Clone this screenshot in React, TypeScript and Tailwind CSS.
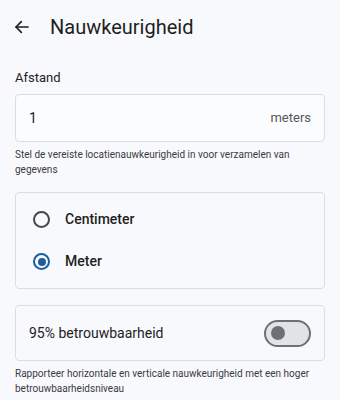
import React, { useState } from "react";

const font = { fontFamily: "Roboto, 'Noto Sans', sans-serif" };

const Radio = ({ checked }: { checked: boolean }) => (
  <span
    className={`flex h-[17px] w-[17px] items-center justify-center rounded-full border-2 ${
      checked ? "border-[#1b5e9b]" : "border-[#45474b]"
    }`}
  >
    {checked && <span className="h-[8px] w-[8px] rounded-full bg-[#1b5e9b]" />}
  </span>
);

export default function App() {
  const [unit, setUnit] = useState("meter");
  const [confident, setConfident] = useState(false);

  return (
    <div className="h-[400px] w-[340px] overflow-hidden bg-[#f8f9fd] text-[#1c1c1f]" style={font}>
      <div className="flex h-[54px] items-center px-[14px]">
        <svg width="16" height="16" viewBox="0 0 24 24" fill="none" stroke="#1c1c1f" strokeWidth="2.4" strokeLinecap="round" strokeLinejoin="round">
          <path d="M21 12H3" />
          <path d="M11 4l-8 8 8 8" />
        </svg>
        <h1 className="ml-[20px] text-[20px] leading-none text-[#1f1f22]">Nauwkeurigheid</h1>
      </div>

      <div className="px-[15px]">
        <div className="mt-[17px] text-[13px] leading-none text-[#222]">Afstand</div>
        <div className="mt-[10px] flex h-[48px] items-center justify-between rounded-[4px] border border-[#dcdde1] bg-[#fbfcfe] pl-[13px] pr-[13px]">
          <span className="text-[14px] text-[#222]">1</span>
          <span className="text-[13px] text-[#55575c]">meters</span>
        </div>
        <p className="mt-[5px] text-[10px] leading-[15px] text-[#3a3b3f]">
          Stel de vereiste locatienauwkeurigheid in voor verzamelen van gegevens
        </p>

        <div className="mt-[15px] flex h-[97px] flex-col justify-center gap-[24px] rounded-[4px] border border-[#dcdde1] bg-[#f8f9fd] px-[17px]">
          {[
            { id: "centimeter", label: "Centimeter" },
            { id: "meter", label: "Meter" },
          ].map((o) => (
            <button key={o.id} onClick={() => setUnit(o.id)} className="flex h-[18px] items-center gap-[15px] text-left">
              <Radio checked={unit === o.id} />
              <span className="text-[14px] font-medium text-[#1f1f22]">{o.label}</span>
            </button>
          ))}
        </div>

        <div className="mt-[16px] flex h-[56px] items-center justify-between rounded-[4px] border border-[#dcdde1] bg-[#f8f9fd] pl-[13px] pr-[13px]">
          <span className="text-[14px] text-[#222]">95% betrouwbaarheid</span>
          <button
            onClick={() => setConfident(!confident)}
            className={`flex h-[27px] w-[47px] items-center rounded-full border-2 px-[5px] ${
              confident ? "justify-end border-[#1b5e9b] bg-[#1b5e9b]" : "border-[#6e7075] bg-[#e2e3e7]"
            }`}
          >
            <span className={`h-[14px] w-[14px] rounded-full ${confident ? "bg-white" : "bg-[#6e7075]"}`} />
          </button>
        </div>
        <p className="mt-[5px] text-[10px] leading-[15px] text-[#3a3b3f]">
          Rapporteer horizontale en verticale nauwkeurigheid met een hoger betrouwbaarheidsniveau
        </p>
      </div>
    </div>
  );
}
